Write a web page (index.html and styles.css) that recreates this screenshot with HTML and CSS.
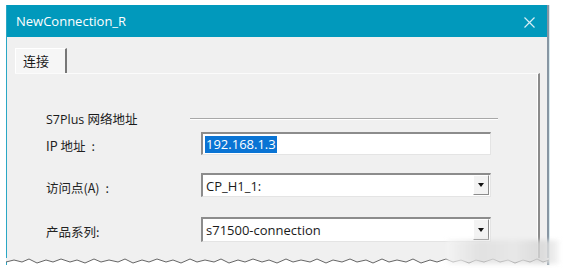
FILE: index.html
```html
<!DOCTYPE html>
<html lang="zh">
<head>
    <meta charset="UTF-8">
    <title>NewConnection_R</title>
    <link rel="stylesheet" href="styles.css">
</head>
<body>
    <div class="window">
        <div class="titlebar">
            <span class="title">NewConnection_R</span>
            <svg class="close" width="11" height="11" viewBox="0 0 11 11">
                <path d="M0.5 0.5 L10.5 10.5 M10.5 0.5 L0.5 10.5" stroke="#d6eef5" stroke-width="1.2" fill="none"/>
            </svg>
        </div>
        <div class="client">
            <div class="tabs">
                <div class="tab">连接</div>
            </div>
            <div class="panel">
                <div class="group-head">
                    <span class="group-title">S7Plus 网络地址</span>
                    <span class="group-line"></span>
                </div>

                <div class="row row-ip">
                    <label>IP 地址<span class="colon">:</span></label>
                    <div class="field"><span class="selected">192.168.1.3</span></div>
                </div>

                <div class="row row-ap">
                    <label>访问点(A)<span class="colon">:</span></label>
                    <div class="field combo">
                        <span class="value">CP_H1_1:</span>
                        <span class="arrow"><i></i></span>
                    </div>
                </div>

                <div class="row row-family">
                    <label>产品系列:</label>
                    <div class="field combo">
                        <span class="value">s71500-connection</span>
                        <span class="arrow"><i></i></span>
                    </div>
                </div>
            </div>
        </div>
        <!-- abgerissene Kante unten -->
        <svg class="torn" width="543" height="7" viewBox="0 0 543 7" preserveAspectRatio="none">
            <path d="M0 0 L543 0 L543 2 L537 4 L531 1 L524 4 L517 2 L509 5 L502 2 L494 4 L487 1 L478 4 L470 2 L463 5 L455 2 L447 4 L440 1 L431 4 L424 2 L415 5 L407 1 L400 4 L391 2 L383 4 L376 1 L367 5 L360 2 L351 4 L344 1 L336 4 L327 2 L320 5 L311 1 L304 4 L295 2 L287 4 L280 1 L271 5 L263 2 L256 4 L247 1 L239 4 L232 2 L223 5 L215 1 L208 4 L199 2 L191 4 L184 1 L175 5 L167 2 L160 4 L151 1 L143 4 L136 2 L127 5 L119 1 L112 4 L103 2 L95 4 L88 1 L79 5 L71 2 L64 4 L55 1 L47 4 L40 2 L31 5 L23 1 L16 4 L8 2 L0 4 Z" fill="#f0f0f0"/>
            <path d="M543 2 L537 4 L531 1 L524 4 L517 2 L509 5 L502 2 L494 4 L487 1 L478 4 L470 2 L463 5 L455 2 L447 4 L440 1 L431 4 L424 2 L415 5 L407 1 L400 4 L391 2 L383 4 L376 1 L367 5 L360 2 L351 4 L344 1 L336 4 L327 2 L320 5 L311 1 L304 4 L295 2 L287 4 L280 1 L271 5 L263 2 L256 4 L247 1 L239 4 L232 2 L223 5 L215 1 L208 4 L199 2 L191 4 L184 1 L175 5 L167 2 L160 4 L151 1 L143 4 L136 2 L127 5 L119 1 L112 4 L103 2 L95 4 L88 1 L79 5 L71 2 L64 4 L55 1 L47 4 L40 2 L31 5 L23 1 L16 4 L8 2 L0 4" fill="none" stroke="#555" stroke-width="0.9"/>
        </svg>
    </div>
    <div class="watermark"></div>
</body>
</html>
```

FILE: styles.css
```css
body {
    margin: 0;
    background: #fff;
    font-family: "Open Sans", "Noto Sans CJK SC", sans-serif;
    font-size: 13px;
    color: #1a1a1a;
}

.window {
    margin: 5px 0 0 6px;
    width: 540px;
    border-left: 1px solid #2aa7c5;
    border-right: 2px solid #8796a3;
    box-shadow: 1px 0 0 #d8eaf0;
}

.titlebar {
    height: 32px;
    background: #0199bc;
    display: flex;
    align-items: center;
    justify-content: space-between;
    padding: 0 12px 0 9px;
    color: #fff;
}

.title {
    font-size: 13px;
    margin-top: -1px;
}

.close {
    margin-top: 2px;
}

.client {
    box-sizing: border-box;
    background: #f0f0f0;
    padding: 11px 7px 0 8px;
    height: 221px;
    overflow: hidden;
}

.tabs {
    display: flex;
}

.tab {
    width: 52px;
    height: 25px;
    box-sizing: border-box;
    background: #f6f6f6;
    border-top: 1px solid #fff;
    border-left: 1px solid #fff;
    border-right: 2px solid #777;
    padding: 4px 0 0 7px;
    font-family: "Noto Sans CJK SC", sans-serif;
    font-size: 13px;
    line-height: 16px;
}

.panel {
    border-top: 1px solid #fbfbfb;
    border-right: 2px solid #8a8a8a;
    box-shadow: inset -1px 0 0 #fff;
    background: #f0f0f0;
    height: 200px;
    padding: 34px 47px 0 31px;
}

.group-head {
    display: flex;
    align-items: center;
    height: 20px;
}

.group-title {
    width: 144px;
    font-size: 12.5px;
}

.group-line {
    flex: 1;
    height: 0;
    border-top: 1px solid #a8a8a8;
    border-bottom: 1px solid #fff;
    margin-right: -7px;
    margin-top: 2px;
}

.row {
    display: grid;
    grid-template-columns: 155px 1fr;
    align-items: center;
}

.row label {
    padding-top: 4px;
    font-family: "Noto Sans CJK SC", sans-serif;
    font-size: 12.5px;
    color: #222;
}

/* Doppelpunkt mit Abstand wie im Original */
.colon {
    margin-left: 6px;
}

.row-ip { margin-top: 4px; }
.row-ap { margin-top: 18px; }
.row-family { margin-top: 20px; }

.field {
    box-sizing: border-box;
    height: 23px;
    background: #fff;
    border-top: 2px solid #8c8c8c;
    border-left: 2px solid #8c8c8c;
    border-right: 1px solid #e4e4e4;
    border-bottom: 1px solid #e4e4e4;
    display: flex;
    align-items: center;
    padding-left: 2px;
}

.row-ap .field { height: 24px; }
.row-family .field { height: 25px; }

.selected {
    background: #0a74d4;
    color: #fff;
    padding: 0 1px;
    line-height: 17px;
}

.combo .value {
    flex: 1;
    padding-left: 1px;
}

.arrow {
    width: 16px;
    align-self: stretch;
    box-sizing: border-box;
    background: #f3f3f3;
    border-left: 1px solid #fff;
    border-top: 1px solid #fff;
    border-right: 1px solid #8c8c8c;
    border-bottom: 1px solid #8c8c8c;
    display: flex;
    align-items: center;
    justify-content: center;
    margin: 0 1px 1px 0;
}

.arrow i {
    width: 0;
    height: 0;
    border-left: 3.5px solid transparent;
    border-right: 3.5px solid transparent;
    border-top: 4px solid #111;
}

.torn {
    display: block;
    margin-left: -1px;
}

.watermark {
    position: absolute;
    left: 447px;
    top: 240px;
    width: 112px;
    height: 24px;
    background: linear-gradient(90deg, #f4f4f4, #dedede 30%, #e6e6e6 60%, #d6d6d6 85%, #f2f2f2);
    filter: blur(2px);
    opacity: 0.8;
}
```
